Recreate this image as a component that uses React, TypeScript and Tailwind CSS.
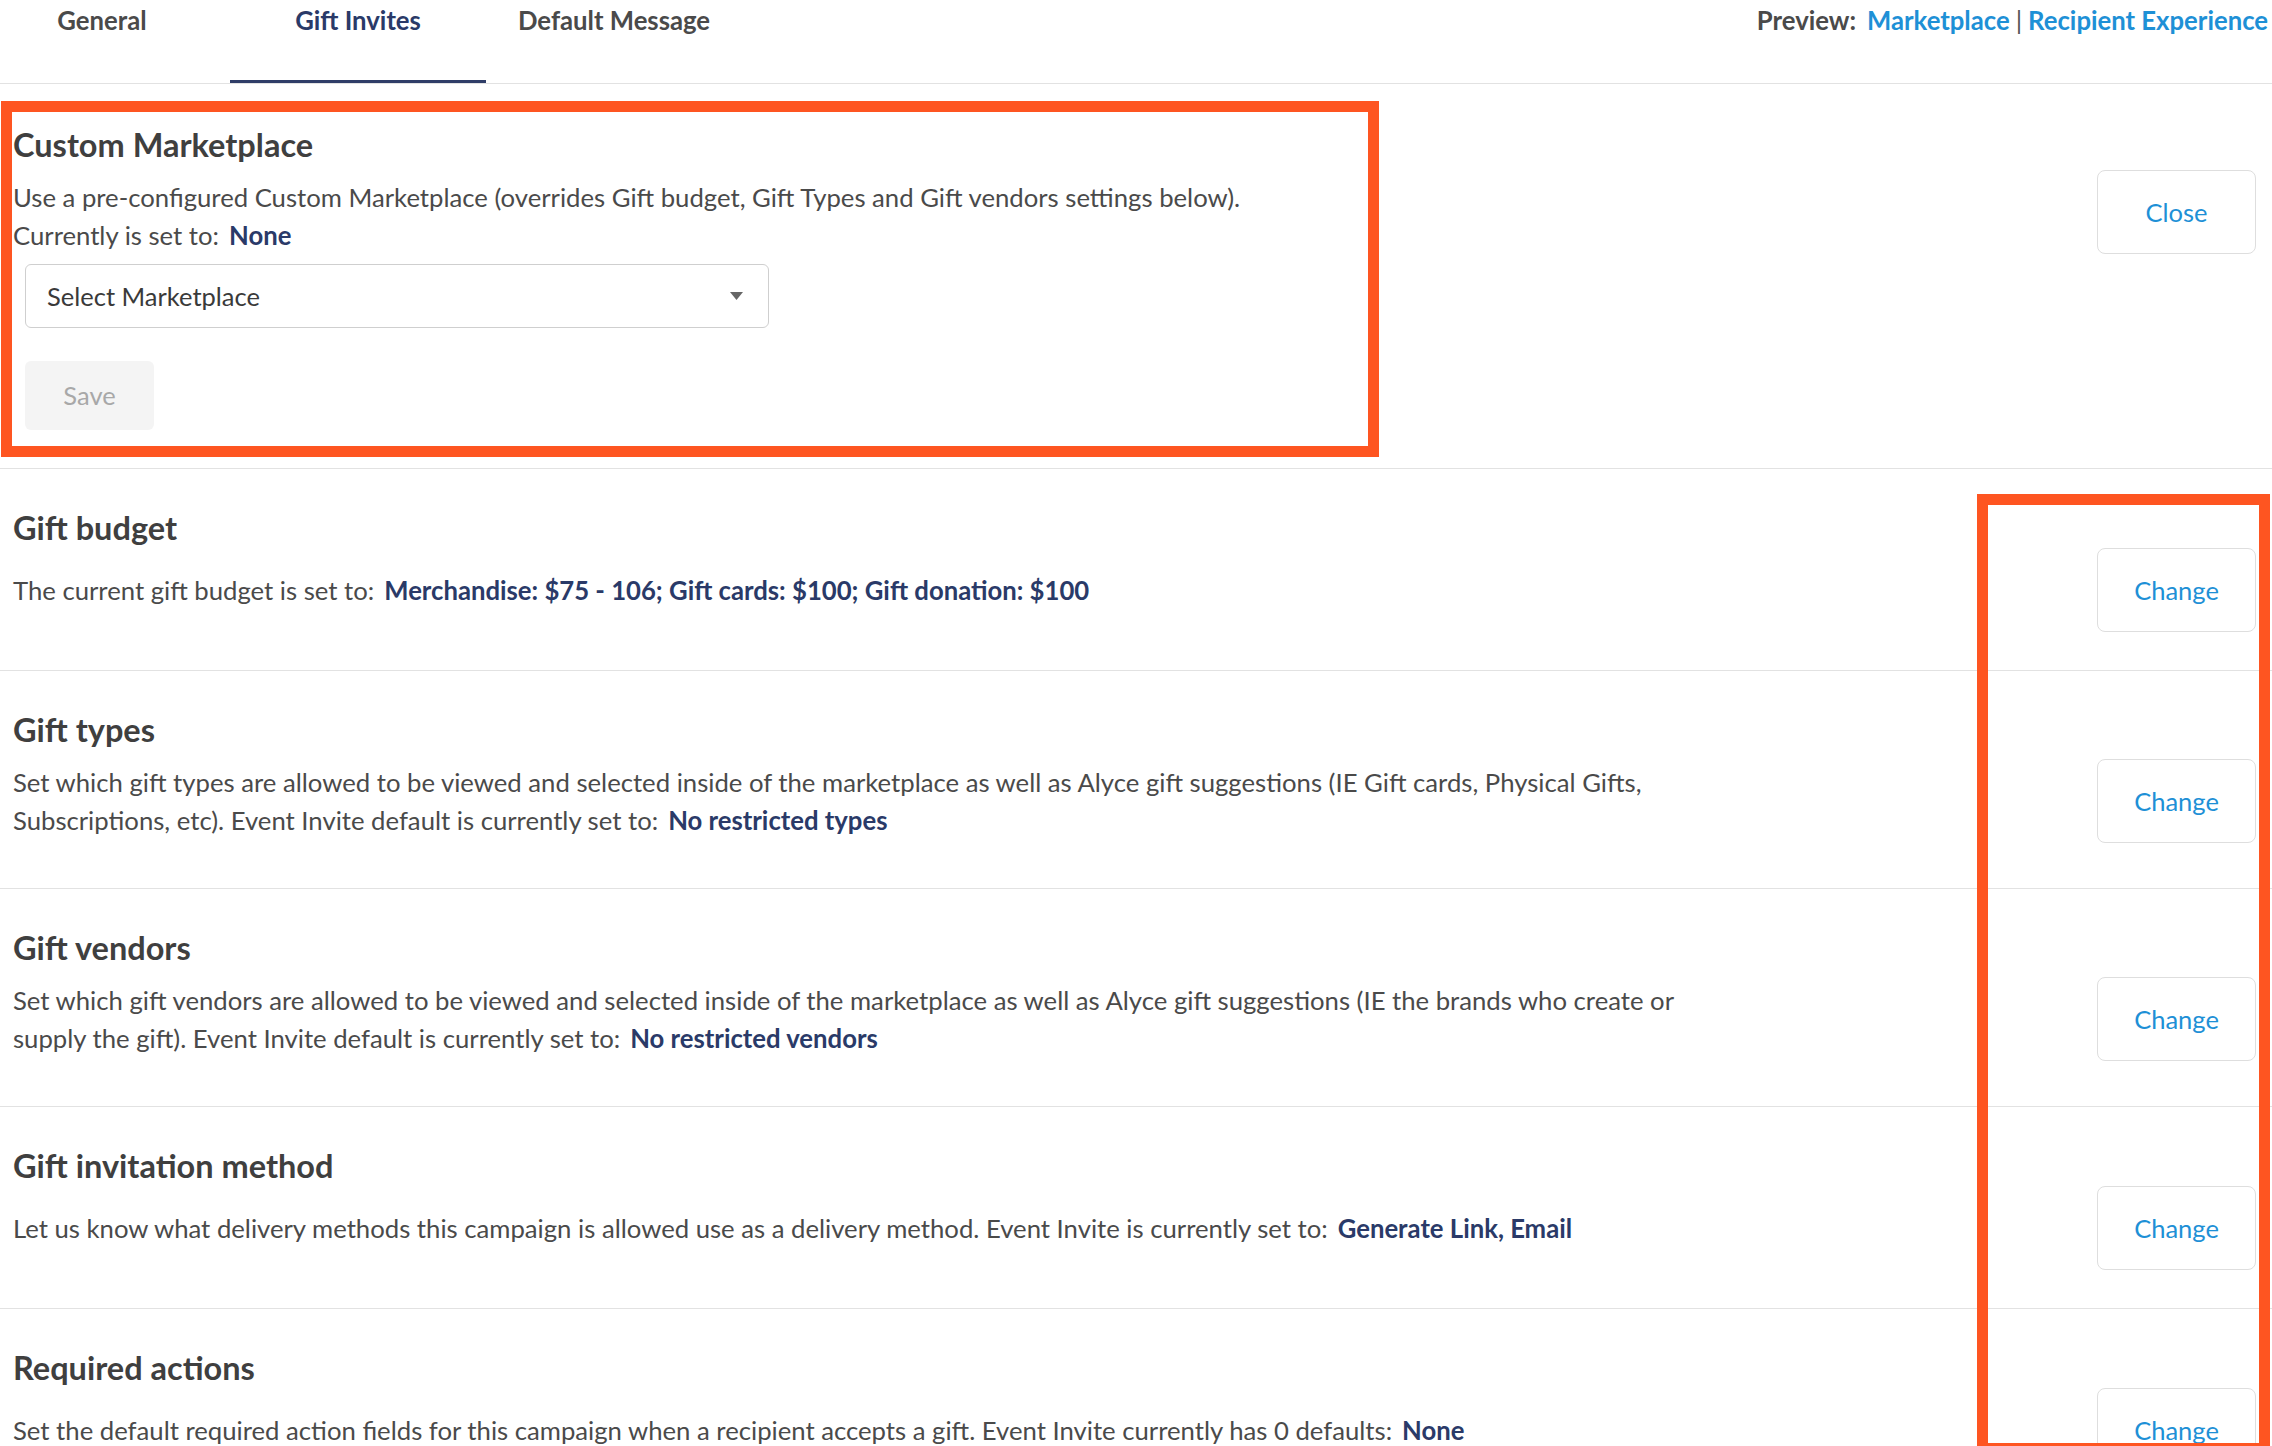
import React from "react";

const font = { fontFamily: "Lato, 'Noto Sans', sans-serif" };

function Btn({ label }: { label: string }) {
  return (
    <button className="h-[84px] w-[159px] shrink-0 rounded-[8px] border border-[#dedede] bg-white text-[25.5px] text-[#1e90d6]">
      {label}
    </button>
  );
}

function Val({ children }: { children: React.ReactNode }) {
  return <span className="ml-[10px] font-bold text-[#2a3a68]">{children}</span>;
}

function Section({
  title,
  children,
  last,
  two,
}: {
  title: string;
  children: React.ReactNode;
  last?: boolean;
  two?: boolean;
}) {
  return (
    <section
      className={
        (last ? "" : "border-b border-[#e2e2e2] ") +
        (two ? "pb-[36px] " : "pb-[38px] ") +
        "pl-[13px] pr-[16px] pt-[39px]"
      }
    >
      <h2 className="text-[32.5px] font-bold leading-[40px] text-[#3f3f3f]">{title}</h2>
      <div className="flex items-center justify-between">
        <p className="my-[13px] w-[1770px] text-[25.7px] leading-[38px] text-[#4a4a4a]">{children}</p>
        <Btn label="Change" />
      </div>
    </section>
  );
}

export default function App() {
  return (
    <div className="relative h-[1446px] w-[2272px] overflow-hidden bg-white" style={font}>
      {/* Header */}
      <div className="flex h-[84px] items-start justify-between border-b border-[#e2e2e2]">
        <div className="-ml-[26px] flex h-full">
          <div className="flex h-full w-[256px] justify-center text-[25.7px] font-bold leading-[40px] text-[#4a4a4a]">
            General
          </div>
          <div className="flex h-full w-[256px] justify-center border-b-[3px] border-[#2f3d67] text-[25.7px] font-bold leading-[40px] text-[#2a3a68]">
            Gift Invites
          </div>
          <div className="flex h-full w-[256px] justify-center text-[25.7px] font-bold leading-[40px] text-[#4a4a4a]">
            Default Message
          </div>
        </div>
        <div className="pr-[4px] text-[25.7px] font-bold leading-[40px]">
          <span className="text-[#4a4a4a]">Preview:</span>
          <span className="ml-[11px] text-[#1e90d6]">Marketplace</span>
          <span className="mx-[6px] font-normal text-[#555]">|</span>
          <span className="text-[#1e90d6]">Recipient Experience</span>
        </div>
      </div>

      {/* Custom Marketplace */}
      <section className="border-b border-[#e2e2e2] pb-[38px] pl-[13px] pr-[16px] pt-[41px]">
        <h2 className="text-[32.5px] font-bold leading-[40px] text-[#3f3f3f]">Custom Marketplace</h2>
        <div className="flex items-start justify-between">
          <div className="flex flex-col">
            <p className="mb-[10px] mt-[13px] text-[25.7px] leading-[38px] text-[#4a4a4a]">
              Use a pre-configured Custom Marketplace (overrides Gift budget, Gift Types and Gift vendors settings below).
              <br />
              Currently is set to:<Val>None</Val>
            </p>
            <div className="ml-[12px] flex h-[64px] w-[744px] items-center justify-between rounded-[6px] border border-[#cfcfcf] pl-[21px] pr-[25px] text-[25.5px] text-[#3a3a3a]">
              <span>Select Marketplace</span>
              <svg width="13" height="8" viewBox="0 0 13 8">
                <path d="M0 0 L13 0 L6.5 8 Z" fill="#666" />
              </svg>
            </div>
            <button className="ml-[12px] mt-[33px] h-[69px] w-[129px] rounded-[6px] bg-[#f4f4f4] text-[25.5px] text-[#a8a8a8]">
              Save
            </button>
          </div>
          <div className="mt-[5px]">
            <Btn label="Close" />
          </div>
        </div>
      </section>

      <Section title="Gift budget">
        The current gift budget is set to:<Val>Merchandise: $75 - 106; Gift cards: $100; Gift donation: $100</Val>
      </Section>
      <Section title="Gift types" two>
        Set which gift types are allowed to be viewed and selected inside of the marketplace as well as Alyce gift
        suggestions (IE Gift cards, Physical Gifts,
        <br />
        Subscriptions, etc). Event Invite default is currently set to:
        <Val>No restricted types</Val>
      </Section>
      <Section title="Gift vendors" two>
        Set which gift vendors are allowed to be viewed and selected inside of the marketplace as well as Alyce gift
        suggestions (IE the brands who create or
        <br />
        supply the gift). Event Invite default is currently set to:
        <Val>No restricted vendors</Val>
      </Section>
      <Section title="Gift invitation method">
        Let us know what delivery methods this campaign is allowed use as a delivery method. Event Invite is currently
        set to:<Val>Generate Link, Email</Val>
      </Section>
      <Section title="Required actions" last>
        Set the default required action fields for this campaign when a recipient accepts a gift. Event Invite currently
        has 0 defaults:<Val>None</Val>
      </Section>

      {/* Annotation overlays */}
      <div className="pointer-events-none absolute left-[1px] top-[101px] h-[356px] w-[1378px] border-[11px] border-[#fe5521]" />
      <div className="pointer-events-none absolute left-[1977px] top-[494px] h-[960px] w-[293px] border-[11px] border-[#fe5521]" />
    </div>
  );
}
